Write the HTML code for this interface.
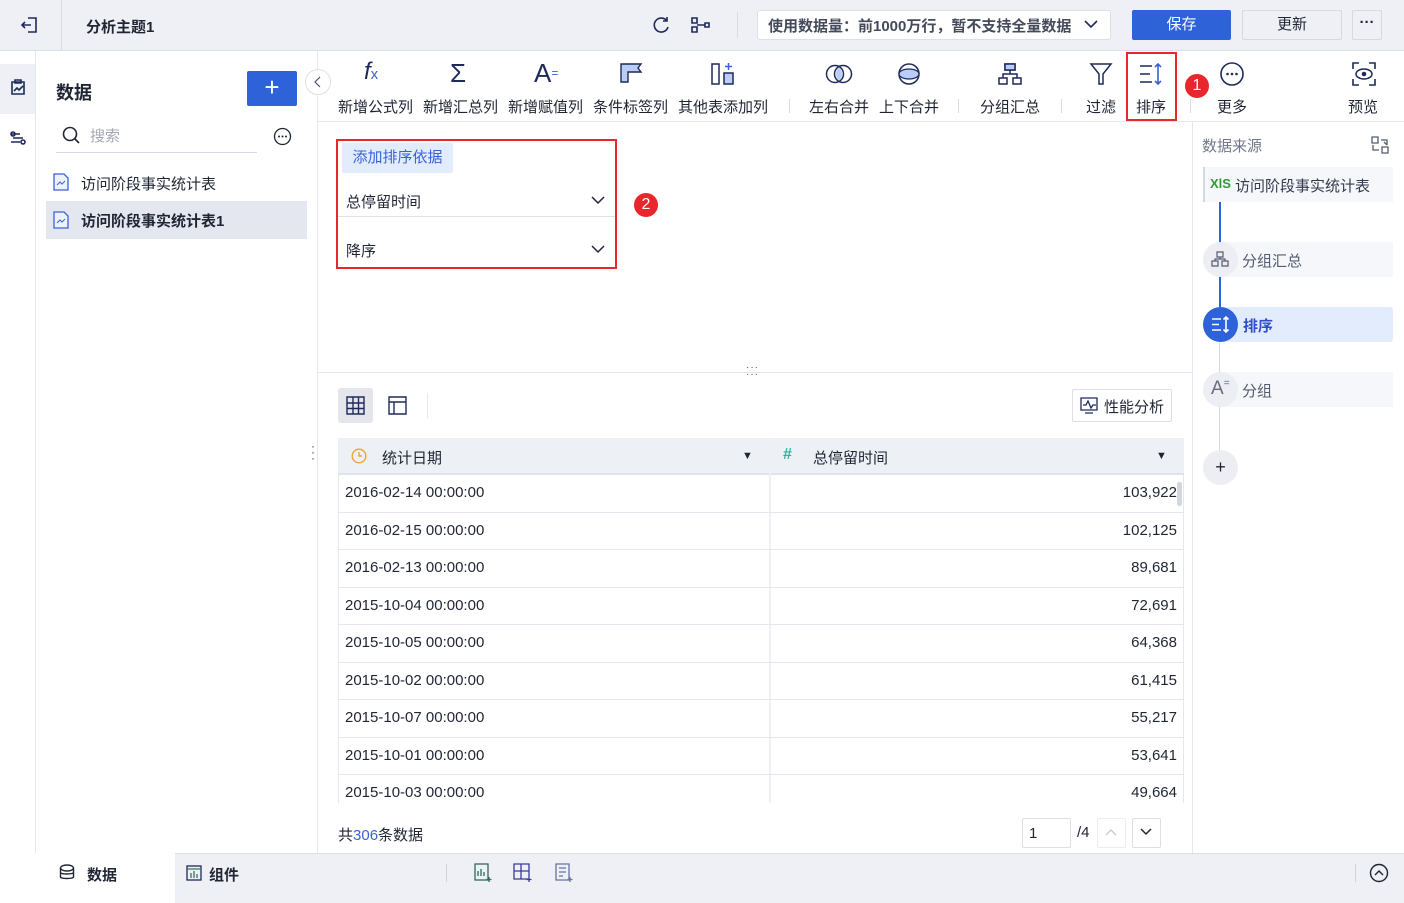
<!DOCTYPE html>
<html><head><meta charset="utf-8"><style>
*{margin:0;padding:0;box-sizing:border-box}
body{width:1404px;height:903px;position:relative;overflow:hidden;background:#fff;font-family:"Liberation Sans","Noto Sans CJK SC",sans-serif;color:#1f2533;font-size:15px}
.a{position:absolute}
.ic{stroke:#1e2a5a;fill:none;stroke-width:1.6}
.tb{position:absolute;top:96px;font-size:15px;color:#1f2533;white-space:nowrap}
.row{position:absolute;left:338px;width:846px;height:37.5px;border-bottom:1px solid #e4e7ee;font-size:15px}
.row span{position:absolute;top:9px}
.row .r{right:7px}
.row .l{left:7px}
</style></head><body>
<!-- top bar -->
<div class="a" style="left:0;top:0;width:1404px;height:51px;background:#eef0f5;border-bottom:1px solid #dde0e8"></div>
<div class="a" style="left:61px;top:0;width:1px;height:50px;background:#d8dbe3"></div>
<svg class="a" style="left:20px;top:15px" width="20" height="20" viewBox="0 0 20 20"><path class="ic" stroke-width="1.3" d="M8 3h8v14H8M2 10h9M5 7l-3 3 3 3"/></svg>
<div class="a" style="left:86px;top:16px;font-weight:bold;font-size:15px">分析主题1</div>
<svg class="a" style="left:650px;top:14px" width="22" height="22" viewBox="0 0 22 22"><path class="ic" d="M17 7a7 7 0 1 0 1 6M17 3v4h-4"/></svg>
<svg class="a" style="left:690px;top:15px" width="22" height="20" viewBox="0 0 22 20"><path class="ic" stroke-width="1.4" d="M2 3h5v5H2zM2 12h5v5H2zM7 10h8M15 8h4v4h-4z"/></svg>
<div class="a" style="left:737px;top:12px;width:1px;height:26px;background:#d8dbe3"></div>
<div class="a" style="left:757px;top:10px;width:354px;height:30px;background:#fff;border:1px solid #dcdfe6;border-radius:3px;font-size:15px;color:#444a5a;padding:4px 0 0 10px;font-weight:bold">使用数据量：前1000万行，暂不支持全量数据</div>
<svg class="a" style="left:1083px;top:17px" width="16" height="14"><path class="ic" d="M2 4l6 6 6-6"/></svg>
<div class="a" style="left:1132px;top:10px;width:99px;height:30px;background:#2d62d8;border-radius:2px;color:#fff;text-align:center;line-height:30px;font-size:15px">保存</div>
<div class="a" style="left:1242px;top:10px;width:100px;height:30px;background:#eef0f5;border:1px solid #d6d9e0;border-radius:2px;text-align:center;line-height:28px;font-size:15px">更新</div>
<div class="a" style="left:1352px;top:10px;width:30px;height:30px;border:1px solid #d6d9e0;border-radius:2px;text-align:center;line-height:24px;font-weight:bold">···</div>

<!-- left rail -->
<div class="a" style="left:0;top:51px;width:36px;height:802px;background:#fff;border-right:1px solid #e4e7ee"></div>
<div class="a" style="left:0;top:64px;width:35px;height:50px;background:#eef0f5"></div>
<svg class="a" style="left:8px;top:78px" width="20" height="20" viewBox="0 0 20 20"><path class="ic" stroke-width="1.4" d="M4 4h12v12H4zM7 2h6v3H7zM6 13l3-3 2 2 4-4"/></svg>
<svg class="a" style="left:8px;top:128px" width="20" height="20" viewBox="0 0 20 20"><path class="ic" stroke-width="1.4" d="M3 6h9M3 14h9M5 10h10"/><circle class="ic" cx="5" cy="6" r="2" stroke-width="1.4"/><circle class="ic" cx="15" cy="14" r="2" stroke-width="1.4"/></svg>

<!-- data panel -->
<div class="a" style="left:317px;top:51px;width:1px;height:802px;background:#e4e7ee"></div>
<div class="a" style="left:56px;top:79px;font-size:18px;font-weight:bold">数据</div>
<div class="a" style="left:247px;top:71px;width:50px;height:35px;background:#2d62d8;border-radius:2px;color:#fff;font-size:26px;text-align:center;line-height:33px">+</div>
<div class="a" style="left:305px;top:69px;width:26px;height:26px;border:1px solid #dde0e8;border-radius:50%;background:#fff"></div>
<svg class="a" style="left:313px;top:76px" width="10" height="12"><path d="M7 1L2 6l5 5" stroke="#4a5170" fill="none" stroke-width="1.2"/></svg>
<svg class="a" style="left:61px;top:125px" width="20" height="20"><circle cx="9" cy="9" r="6.5" stroke="#1f2533" fill="none" stroke-width="1.6"/><path d="M14 14l4 4" stroke="#1f2533" stroke-width="1.6"/></svg>
<div class="a" style="left:90px;top:125px;color:#a4a8b3">搜索</div>
<div class="a" style="left:56px;top:152px;width:201px;height:1px;background:#d8dbe3"></div>
<svg class="a" style="left:273px;top:127px" width="19" height="19"><circle cx="9.5" cy="9.5" r="8" stroke="#1f2533" fill="none" stroke-width="1.3"/><circle cx="6" cy="9.5" r="1" fill="#1f2533"/><circle cx="9.5" cy="9.5" r="1" fill="#1f2533"/><circle cx="13" cy="9.5" r="1" fill="#1f2533"/></svg>
<svg class="a" style="left:53px;top:173px" width="16" height="18"><path d="M1 1h10l4 4v12H1z" stroke="#3a62d8" fill="#eef2fc" stroke-width="1.3"/><path d="M4 12l3-3 2 2 3-3" stroke="#3a62d8" fill="none"/></svg>
<div class="a" style="left:81px;top:173px">访问阶段事实统计表</div>
<div class="a" style="left:46px;top:201px;width:261px;height:38px;background:#e4e7ef"></div>
<svg class="a" style="left:53px;top:211px" width="16" height="18"><path d="M1 1h10l4 4v12H1z" stroke="#3a62d8" fill="#eef2fc" stroke-width="1.3"/><path d="M4 12l3-3 2 2 3-3" stroke="#3a62d8" fill="none"/></svg>
<div class="a" style="left:81px;top:210px;font-weight:bold">访问阶段事实统计表1</div>
<div class="a" style="left:311px;top:443px;font-size:12px;line-height:6px;color:#444">·<br>·<br>·</div>

<!-- toolbar -->
<div class="a" style="left:318px;top:121px;width:1086px;height:1px;background:#e4e7ee"></div>
<div class="a" style="left:364px;top:58px;font-family:'Liberation Sans',sans-serif;font-style:italic;font-size:24px;color:#1e2a5a">f<span style="font-size:15px;font-style:normal;color:#3a62d8">x</span></div>
<div class="a" style="left:450px;top:58px;font-size:26px;color:#1e2a5a;line-height:30px">Σ</div>
<div class="a" style="left:534px;top:58px;font-size:26px;color:#1e2a5a;line-height:30px">A<span style="font-size:12px;vertical-align:top;color:#3a62d8">=</span></div>
<svg class="a" style="left:619px;top:62px" width="24" height="24"><path d="M2 2h20l-3 4 3 4H9v10H2z" fill="#b9cdf6" stroke="#1e2a5a" stroke-width="1.4"/></svg>
<svg class="a" style="left:710px;top:61px" width="26" height="26"><rect x="2" y="3" width="7" height="20" fill="none" stroke="#1e2a5a" stroke-width="1.5"/><rect x="14" y="12" width="9" height="11" fill="#b9cdf6" stroke="#1e2a5a" stroke-width="1.5"/><path d="M18.5 2v7M15 5.5h7" stroke="#3a62d8" stroke-width="1.5"/></svg>
<div class="tb" style="left:338px">新增公式列</div>
<div class="tb" style="left:423px">新增汇总列</div>
<div class="tb" style="left:508px">新增赋值列</div>
<div class="tb" style="left:593px">条件标签列</div>
<div class="tb" style="left:678px">其他表添加列</div>
<div class="a" style="left:789px;top:99px;width:1px;height:14px;background:#d8dbe3"></div>
<svg class="a" style="left:825px;top:61px" width="28" height="26"><circle cx="10" cy="13" r="8.5" fill="none" stroke="#1e2a5a" stroke-width="1.5"/><circle cx="18" cy="13" r="8.5" fill="none" stroke="#1e2a5a" stroke-width="1.5"/><path d="M14 6.5a8.5 8.5 0 0 1 0 13a8.5 8.5 0 0 1 0-13z" fill="#b9cdf6"/></svg>
<svg class="a" style="left:897px;top:59px" width="24" height="30"><circle cx="12" cy="15" r="10" fill="none" stroke="#1e2a5a" stroke-width="1.5"/><ellipse cx="12" cy="15" rx="10" ry="5" fill="#b9cdf6" stroke="#1e2a5a" stroke-width="1.3"/></svg>
<div class="tb" style="left:809px">左右合并</div>
<div class="tb" style="left:879px">上下合并</div>
<div class="a" style="left:958px;top:99px;width:1px;height:14px;background:#d8dbe3"></div>
<svg class="a" style="left:997px;top:62px" width="26" height="24"><path d="M8 2h10v6H8zM2 16h8v6H2zM16 16h8v6h-8zM13 8v4M6 16v-4h14v4" fill="none" stroke="#1e2a5a" stroke-width="1.5"/><rect x="8" y="2" width="10" height="6" fill="#b9cdf6" stroke="#1e2a5a" stroke-width="1.5"/></svg>
<div class="tb" style="left:980px">分组汇总</div>
<div class="a" style="left:1061px;top:99px;width:1px;height:14px;background:#d8dbe3"></div>
<svg class="a" style="left:1089px;top:62px" width="24" height="24"><path d="M2 2h20l-8 10v10h-4V12z" fill="none" stroke="#1e2a5a" stroke-width="1.5"/></svg>
<div class="tb" style="left:1086px">过滤</div>
<div class="a" style="left:1126px;top:52px;width:51px;height:69px;border:2px solid #e8262b"></div>
<svg class="a" style="left:1138px;top:62px" width="26" height="24"><path d="M2 4h12M2 12h10M2 20h12" stroke="#1e2a5a" stroke-width="1.6"/><path d="M20 2v20M17 5l3-3 3 3M17 19l3 3 3-3" fill="none" stroke="#3a62d8" stroke-width="1.6"/></svg>
<div class="tb" style="left:1136px">排序</div>
<div class="a" style="left:1185px;top:74px;width:24px;height:24px;border-radius:50%;background:#e8262b;color:#fff;font-size:16px;text-align:center;line-height:24px">1</div>
<div class="a" style="left:1190px;top:99px;width:1px;height:14px;background:#d8dbe3"></div>
<svg class="a" style="left:1219px;top:61px" width="26" height="26"><circle cx="13" cy="13" r="11" fill="none" stroke="#1e2a5a" stroke-width="1.6"/><circle cx="8.5" cy="13" r="1.3" fill="#1e2a5a"/><circle cx="13" cy="13" r="1.3" fill="#1e2a5a"/><circle cx="17.5" cy="13" r="1.3" fill="#1e2a5a"/></svg>
<div class="tb" style="left:1217px">更多</div>
<svg class="a" style="left:1351px;top:61px" width="26" height="26"><path d="M2 8V2h6M18 2h6v6M24 18v6h-6M8 24H2v-6" fill="none" stroke="#1e2a5a" stroke-width="1.6"/><ellipse cx="13" cy="13" rx="8" ry="5" fill="none" stroke="#1e2a5a" stroke-width="1.5"/><circle cx="13" cy="13" r="2.3" fill="#1e2a5a"/></svg>
<div class="tb" style="left:1348px">预览</div>

<!-- right panel -->
<div class="a" style="left:1192px;top:122px;width:1px;height:731px;background:#e4e7ee"></div>
<div class="a" style="left:1202px;top:135px;color:#70788a">数据来源</div>
<svg class="a" style="left:1371px;top:136px" width="18" height="18"><path d="M1 1h6v6H1zM11 11h6v6h-6zM10 4h6v5M13 6l3 3M8 14H2V9" fill="none" stroke="#555c70" stroke-width="1.3"/></svg>
<div class="a" style="left:1203px;top:167px;width:190px;height:35px;background:#f5f7fb;border-left:2px solid #d4d8e2"></div>
<div class="a" style="left:1210px;top:176px;color:#2f9a37;font-size:13px;font-weight:bold">XlS</div>
<div class="a" style="left:1235px;top:175px;color:#333a4c">访问阶段事实统计表</div>
<div class="a" style="left:1219px;top:202px;width:2px;height:105px;background:#2d62d8"></div>
<div class="a" style="left:1219px;top:342px;width:1px;height:125px;background:#d4d8e2"></div>
<div class="a" style="left:1220px;top:242px;width:173px;height:35px;background:#f5f7fb"></div>
<div class="a" style="left:1203px;top:242px;width:35px;height:35px;border-radius:50%;background:#eceef3"></div>
<svg class="a" style="left:1211px;top:251px" width="18" height="16"><path d="M6 1h6v5H6zM1 10h6v5H1zM11 10h6v5h-6zM9 6v2M4 10V8h10v2" fill="none" stroke="#555c70" stroke-width="1.2"/></svg>
<div class="a" style="left:1242px;top:250px;color:#555c70">分组汇总</div>
<div class="a" style="left:1220px;top:307px;width:173px;height:35px;background:#e3ecfd;border-radius:3px"></div>
<div class="a" style="left:1203px;top:307px;width:35px;height:35px;border-radius:50%;background:#2d62d8"></div>
<svg class="a" style="left:1211px;top:316px" width="20" height="17"><path d="M1 3h9M1 8.5h7M1 14h9" stroke="#fff" stroke-width="1.6"/><path d="M15 1v15M12.5 3.5L15 1l2.5 2.5M12.5 13.5L15 16l2.5-2.5" stroke="#fff" fill="none" stroke-width="1.6"/></svg>
<div class="a" style="left:1243px;top:315px;color:#2d4fc7;font-weight:bold">排序</div>
<div class="a" style="left:1220px;top:372px;width:173px;height:35px;background:#f5f7fb"></div>
<div class="a" style="left:1203px;top:372px;width:35px;height:35px;border-radius:50%;background:#eceef3"></div>
<div class="a" style="left:1211px;top:378px;color:#666d80;font-size:19px">A<span style="font-size:10px;vertical-align:top">=</span></div>
<div class="a" style="left:1242px;top:380px;color:#555c70">分组</div>
<div class="a" style="left:1203px;top:450px;width:35px;height:35px;border-radius:50%;background:#eceef3;text-align:center;line-height:34px;font-size:18px">+</div>

<!-- sort config -->
<div class="a" style="left:336px;top:139px;width:281px;height:130px;border:2px solid #e8262b"></div>
<div class="a" style="left:342px;top:143px;width:111px;height:30px;background:#e3ecfd;border-radius:2px;color:#3a62d8;text-align:center;line-height:30px">添加排序依据</div>
<div class="a" style="left:346px;top:191px">总停留时间</div>
<svg class="a" style="left:590px;top:194px" width="16" height="12"><path d="M2 3l6 6 6-6" stroke="#1f2533" fill="none" stroke-width="1.5"/></svg>
<div class="a" style="left:338px;top:216px;width:277px;height:1px;background:#dfe2e9"></div>
<div class="a" style="left:346px;top:240px">降序</div>
<svg class="a" style="left:590px;top:243px" width="16" height="12"><path d="M2 3l6 6 6-6" stroke="#1f2533" fill="none" stroke-width="1.5"/></svg>
<div class="a" style="left:634px;top:193px;width:24px;height:24px;border-radius:50%;background:#e8262b;color:#fff;font-size:16px;text-align:center;line-height:24px">2</div>

<div class="a" style="left:318px;top:372px;width:874px;height:1px;background:#e4e7ee"></div>
<div class="a" style="left:746px;top:364px;font-size:10px;color:#555;letter-spacing:1px;line-height:7px">···<br>···</div>

<!-- table tools -->
<div class="a" style="left:338px;top:388px;width:35px;height:35px;background:#e4e6ec;border-radius:3px"></div>
<svg class="a" style="left:346px;top:396px" width="19" height="19"><path d="M1 1h17v17H1zM1 7h17M1 12.5h17M7 1v17M12.5 1v17" stroke="#1e2a5a" fill="none" stroke-width="1.4"/></svg>
<svg class="a" style="left:388px;top:396px" width="19" height="19"><path d="M1 1h17v17H1zM1 6h17M6 6v12" stroke="#1e2a5a" fill="none" stroke-width="1.4"/></svg>
<div class="a" style="left:427px;top:393px;width:1px;height:25px;background:#e4e7ee"></div>
<div class="a" style="left:1072px;top:389px;width:100px;height:33px;border:1px solid #dcdfe6;border-radius:2px;background:#fff"></div>
<svg class="a" style="left:1080px;top:397px" width="18" height="17"><path d="M1 1h16v12H1zM3 8l3 0 2-4 3 7 2-3h3M5 16h8" stroke="#1e2a5a" fill="none" stroke-width="1.3"/></svg>
<div class="a" style="left:1104px;top:396px">性能分析</div>

<!-- table -->
<div class="a" style="left:338px;top:438px;width:846px;height:37px;background:#edf0f5;border-bottom:2px solid #dfe3ea"></div>
<div class="a" style="left:769px;top:438px;width:2px;height:365px;background:#eef0f4"></div>
<svg class="a" style="left:351px;top:448px" width="16" height="16"><circle cx="8" cy="8" r="6.8" stroke="#f0a33a" fill="none" stroke-width="1.4"/><path d="M8 4v4h3" stroke="#f0a33a" fill="none" stroke-width="1.4"/></svg>
<div class="a" style="left:382px;top:447px">统计日期</div>
<div class="a" style="left:742px;top:450px;font-size:11px">▼</div>
<div class="a" style="left:783px;top:446px;color:#2fb3a0;font-size:16px;font-weight:bold">#</div>
<div class="a" style="left:813px;top:447px">总停留时间</div>
<div class="a" style="left:1156px;top:450px;font-size:11px">▼</div>
<div class="row" style="top:475px"><span class="l">2016-02-14 00:00:00</span><span class="r">103,922</span></div>
<div class="row" style="top:512.5px"><span class="l">2016-02-15 00:00:00</span><span class="r">102,125</span></div>
<div class="row" style="top:550px"><span class="l">2016-02-13 00:00:00</span><span class="r">89,681</span></div>
<div class="row" style="top:587.5px"><span class="l">2015-10-04 00:00:00</span><span class="r">72,691</span></div>
<div class="row" style="top:625px"><span class="l">2015-10-05 00:00:00</span><span class="r">64,368</span></div>
<div class="row" style="top:662.5px"><span class="l">2015-10-02 00:00:00</span><span class="r">61,415</span></div>
<div class="row" style="top:700px"><span class="l">2015-10-07 00:00:00</span><span class="r">55,217</span></div>
<div class="row" style="top:737.5px"><span class="l">2015-10-01 00:00:00</span><span class="r">53,641</span></div>
<div class="row" style="top:775px;height:28px;border:none;overflow:hidden"><span class="l">2015-10-03 00:00:00</span><span class="r">49,664</span></div>
<div class="a" style="left:338px;top:475px;width:1px;height:328px;background:#e4e7ee"></div>
<div class="a" style="left:1183px;top:475px;width:1px;height:328px;background:#e4e7ee"></div>
<div class="a" style="left:1177px;top:482px;width:5px;height:24px;background:#d4d7de;border-radius:2px"></div>

<div class="a" style="left:338px;top:824px">共<span style="color:#3a62d8">306</span>条数据</div>
<div class="a" style="left:1022px;top:818px;width:49px;height:30px;border:1px solid #dcdfe6;border-radius:2px;padding:6px 0 0 6px">1</div>
<div class="a" style="left:1077px;top:824px">/4</div>
<div class="a" style="left:1097px;top:818px;width:29px;height:30px;border:1px solid #ebedf1;border-radius:2px"></div>
<svg class="a" style="left:1104px;top:826px" width="14" height="12"><path d="M2 9l5-5 5 5" stroke="#c4c8d0" fill="none" stroke-width="1.3"/></svg>
<div class="a" style="left:1132px;top:818px;width:29px;height:30px;border:1px solid #dcdfe6;border-radius:2px"></div>
<svg class="a" style="left:1139px;top:826px" width="14" height="12"><path d="M2 3l5 5 5-5" stroke="#1f2533" fill="none" stroke-width="1.5"/></svg>

<!-- bottom bar -->
<div class="a" style="left:0;top:853px;width:1404px;height:50px;background:#eef0f5;border-top:1px solid #dde0e8"></div>
<div class="a" style="left:0;top:853px;width:175px;height:50px;background:#fff"></div>
<svg class="a" style="left:59px;top:864px" width="16" height="17"><ellipse cx="8" cy="4" rx="6.5" ry="3" stroke="#1f2533" fill="none" stroke-width="1.4"/><path d="M1.5 4v9c0 2 13 2 13 0V4M1.5 8.5c0 2 13 2 13 0" stroke="#1f2533" fill="none" stroke-width="1.4"/></svg>
<div class="a" style="left:87px;top:864px;font-weight:bold">数据</div>
<svg class="a" style="left:186px;top:865px" width="16" height="16"><rect x="1" y="1" width="14" height="14" stroke="#1e2a5a" fill="none" stroke-width="1.3"/><path d="M1 4h14M5 13V8M8 13V6M11 13V9" stroke="#2f7a5a" stroke-width="1.3"/></svg>
<div class="a" style="left:209px;top:864px;font-weight:bold">组件</div>
<div class="a" style="left:446px;top:864px;width:1px;height:18px;background:#d0d3da"></div>
<svg class="a" style="left:474px;top:863px" width="20" height="20"><rect x="1" y="1" width="13" height="16" stroke="#2f6a5a" fill="none" stroke-width="1.3"/><path d="M4 13V8M7 13V6M10 13V9M15 14v5M12.5 16.5h5" stroke="#2f6a5a" stroke-width="1.3"/></svg>
<svg class="a" style="left:513px;top:863px" width="20" height="20"><path d="M1 1h15v15H1zM1 8h15M8 1v15M16 14v5M13.5 16.5h5" stroke="#3a3a9a" fill="none" stroke-width="1.3"/></svg>
<svg class="a" style="left:555px;top:863px" width="20" height="20"><path d="M1 1h13v16H1zM4 5h7M4 9h7M4 13h4M15 14v5M12.5 16.5h5" stroke="#6a72a0" fill="none" stroke-width="1.3"/></svg>
<div class="a" style="left:1355px;top:864px;width:1px;height:18px;background:#d0d3da"></div>
<svg class="a" style="left:1369px;top:863px" width="20" height="20"><circle cx="10" cy="10" r="8.5" stroke="#1f2533" fill="none" stroke-width="1.4"/><path d="M6 12l4-4 4 4" stroke="#1f2533" fill="none" stroke-width="1.4"/></svg>
</body></html>
